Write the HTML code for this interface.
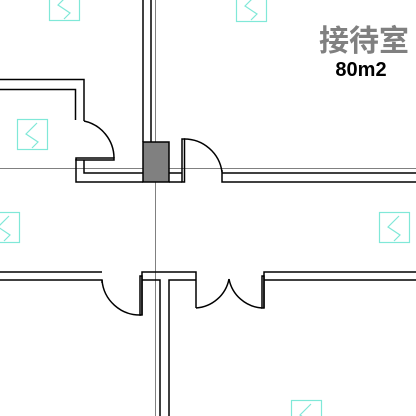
<!DOCTYPE html>
<html><head><meta charset="utf-8"><style>
html,body{margin:0;padding:0;background:#fff;width:416px;height:416px;overflow:hidden}
svg{display:block}
</style></head><body>
<svg width="416" height="416" viewBox="0 0 416 416" xmlns="http://www.w3.org/2000/svg">
<defs>
<g id="ic"><rect x="0.5" y="0.5" width="30" height="30" fill="none" stroke="#80e8d8" stroke-width="1.2"/><polyline points="20,4 9,15 21,23 15,29" fill="none" stroke="#80e8d8" stroke-width="1.2"/></g>
</defs>
<line x1="155.5" y1="0" x2="155.5" y2="416" stroke="#808080" stroke-width="1"/>
<line x1="0" y1="168.5" x2="416" y2="168.5" stroke="#808080" stroke-width="1"/>
<use href="#ic" x="49" y="-10"/>
<use href="#ic" x="236" y="-9"/>
<use href="#ic" x="17" y="119"/>
<use href="#ic" x="-11" y="212"/>
<use href="#ic" x="379" y="212"/>
<use href="#ic" x="291" y="400"/>
<g fill="none" stroke="#000" stroke-width="1.5">
<polyline points="0,79.5 84,79.5 84,121"/>
<polyline points="0,89.5 75.5,89.5 75.5,120"/>
<path d="M84,121 A38,38 0 0 1 114,158"/>
<rect x="76" y="158" width="38" height="2"/>
<polyline points="76,159 76,182 143,182"/>
<polyline points="84,160 84,173 143,173"/>
<line x1="143" y1="0" x2="143" y2="142"/>
<line x1="151" y1="0" x2="151" y2="142"/>
<line x1="169" y1="173" x2="182" y2="173"/>
<line x1="169" y1="182" x2="182" y2="182"/>
<rect x="182" y="139" width="2.5" height="43"/>
<path d="M184,139 A38,38 0 0 1 222,172"/>
<polyline points="222,170 222,182 416,182"/>
<line x1="222" y1="173" x2="416" y2="173"/>
<line x1="0" y1="272" x2="102" y2="272"/>
<polyline points="0,280 102,280 102,283"/>
<path d="M102,280 A38,38 0 0 0 141,315"/>
<rect x="140" y="276" width="2" height="39"/>
<polyline points="142,315 142,272 196,272 196,308"/>
<polyline points="142,280 160,280 160,416"/>
<polyline points="169,416 169,280 196,280"/>
<path d="M196,308 A36,36 0 0 0 229,279"/>
<path d="M229,279 A36,36 0 0 0 262,308"/>
<rect x="262" y="276" width="2" height="32"/>
<polyline points="264,308 264,272 416,272"/>
<line x1="264" y1="280" x2="416" y2="280"/>
</g>
<rect x="143" y="142" width="26" height="40" fill="#808080" stroke="#000" stroke-width="1.5"/>
<text x="364" y="51" text-anchor="middle" font-family="'Noto Sans CJK SC','WenQuanYi Zen Hei',sans-serif" font-weight="bold" font-size="30" fill="#808080">接待室</text>
<text x="361" y="76" text-anchor="middle" font-family="'Liberation Sans',sans-serif" font-weight="bold" font-size="20" fill="#000">80m2</text>
</svg>
</body></html>
